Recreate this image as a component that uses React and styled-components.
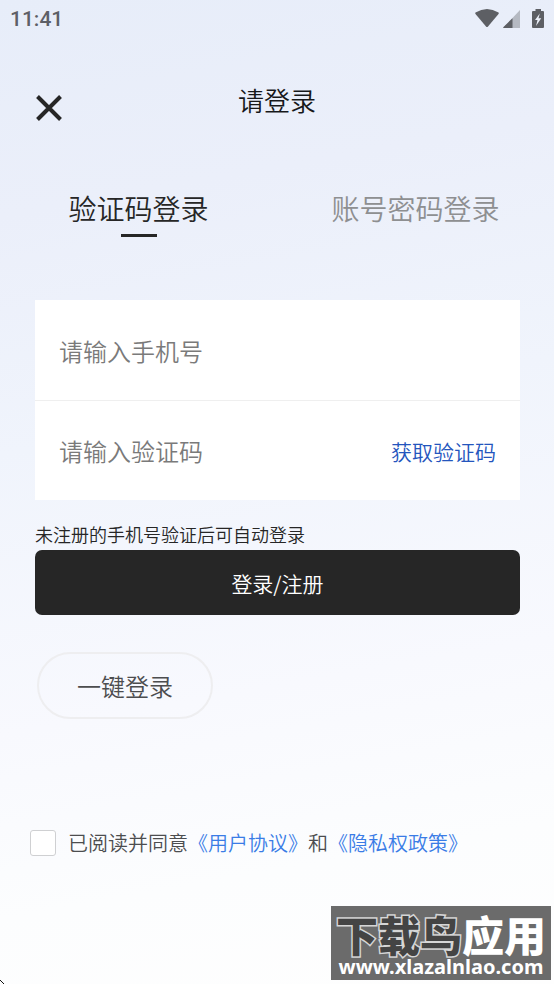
import React, { useState } from "react";
import styled, { createGlobalStyle } from "styled-components";

const GlobalStyle = createGlobalStyle`
  *, *::before, *::after { box-sizing: border-box; }
  body {
    margin: 0;
    font-family: "Noto Sans CJK SC", "Noto Sans", sans-serif;
    font-weight: 350;
    color: #262626;
    background: #fdfdfe;
  }
  button, input { font: inherit; color: inherit; }
  button { padding: 0; border: 0; background: none; cursor: pointer; }
  a { text-decoration: none; }
`;

const Page = styled.div`
  position: relative;
  display: flex;
  flex-direction: column;
  min-height: 100vh;
  overflow: hidden;
  background: linear-gradient(170deg, #e7edf9 0%, #ebeffa 20%, #f0f4fc 42%, #f8f9fe 68%, #fcfdfe 85%, #fefefe 100%);
`;

const StatusBar = styled.div`
  display: flex;
  align-items: center;
  justify-content: space-between;
  height: 38px;
  padding: 0 9px 0 10px;
  color: #5d5f66;
`;

const Clock = styled.time`
  font: 500 21px/24px Roboto, sans-serif;
`;

const StatusIcons = styled.div`
  display: flex;
  align-items: center;
  height: 20px;
`;

const Header = styled.header`
  display: grid;
  grid-template-columns: 28px 1fr 28px;
  align-items: center;
  height: 60px;
  margin-top: 32px;
  padding: 0 35px;
`;

const CloseButton = styled.button`
  display: flex;
  height: 28px;
  margin-top: 16px;
`;

const Title = styled.h1`
  margin: 0;
  text-align: center;
  font-size: 26px;
  line-height: 38px;
  font-weight: 350;
  color: #17181a;
`;

const Tabs = styled.div`
  display: grid;
  grid-template-columns: 1fr 1fr;
  margin-top: 58px;
`;

const Tab = styled.button`
  display: flex;
  flex-direction: column;
  align-items: center;
  gap: 6px;
  font-size: 28px;
  line-height: 40px;
  color: ${(p) => (p.$active ? "#262626" : "#8e8f91")};

  &::after {
    content: "";
    width: 36px;
    height: 3px;
    background: ${(p) => (p.$active ? "#262626" : "transparent")};
  }
`;

const Form = styled.form`
  display: flex;
  flex-direction: column;
  margin: 63px 34px 0 35px;
`;

const Fields = styled.div`
  background: #fff;
`;

const Field = styled.div`
  display: flex;
  align-items: center;
  height: 100px;
  padding: 0 24px;

  & + & { border-top: 1px solid #efefef; }
`;

const TextInput = styled.input`
  flex: 1;
  min-width: 0;
  height: 48px;
  padding: 0;
  border: 0;
  outline: 0;
  background: transparent;
  font-size: 24px;

  &::placeholder { color: #7a7a7a; opacity: 1; }
`;

const CodeButton = styled.button`
  font-size: 21px;
  line-height: 32px;
  color: #2455bd;
`;

const Note = styled.p`
  margin: 20px 0 2px;
  font-size: 18px;
  line-height: 28px;
`;

const SubmitButton = styled.button`
  height: 65px;
  border-radius: 7px;
  background: #262626;
  color: #fff;
  font-size: 21px;
`;

const QuickButton = styled.button`
  align-self: flex-start;
  width: 176px;
  height: 67px;
  margin: 37px 0 0 2px;
  border: 2px solid #eeeef0;
  border-radius: 34px;
  font-size: 24px;
  color: #4c4d4f;
`;

const Agreement = styled.div`
  display: flex;
  align-items: center;
  gap: 12px;
  margin: 108px 30px 0;
  font-size: 20px;
  line-height: 32px;
  color: #4c4d4f;
`;

const Checkbox = styled.input`
  appearance: none;
  flex: none;
  width: 26px;
  height: 26px;
  margin: 0;
  border: 1px solid #cfd0d2;
  border-radius: 3px;
  background: #fff;

  &:checked { background: #4484e8; }
`;

const PolicyLink = styled.a`
  color: #3a7ce6;
`;

const Watermark = styled.div`
  position: absolute;
  right: 3px;
  bottom: 4px;
  display: flex;
  flex-direction: column;
  align-items: center;
  width: 220px;
  height: 74px;
  padding-top: 6px;
  background: #6b6b6b;
  color: #fff;
  white-space: nowrap;
`;

const Brand = styled.div`
  font-size: 42px;
  line-height: 44px;
  font-weight: 900;
`;

const BrandDark = styled.span`
  color: #444;
  paint-order: stroke fill;
  -webkit-text-stroke: 3px #d6d6d6;
`;

const Site = styled.div`
  font: 700 20px/22px "Noto Sans", sans-serif;
`;

const Cursor = styled.svg`
  position: absolute;
  left: 0;
  bottom: 0;
`;

export default function App() {
  const [tab, setTab] = useState("code");
  return (
    <>
      <GlobalStyle />
      <Page>
        <StatusBar>
          <Clock>11:41</Clock>
          <StatusIcons>
            <svg width="70" height="20" viewBox="0 0 70 20" aria-hidden="true">
              <path d="M.5 3.5Q12-3.5 23.5 3.5Q24 4 23.5 5L13 17.6Q12 18.6 11 17.6L.5 5Q0 4 .5 3.5Z" fill="#5d5f64" />
              <path d="M45 1V19H28Z" fill="#b5b9c2" />
              <path d="M37.5 9.2V19H28.5Q28 18.6 28.5 18Z" fill="#5d5f64" />
              <path d="M60.5 0H66V2H68Q69 2 69 3V18Q69 19 68 19H58Q57 19 57 18V3Q57 2 58 2H60.5Z" fill="#5d5f64" />
              <path d="M64.8 4.5L60 11H62.5L61 17L66.2 9.3H63.5Z" fill="#edf1fa" />
            </svg>
          </StatusIcons>
        </StatusBar>
        <Header>
          <CloseButton aria-label="关闭">
            <svg width="28" height="28" viewBox="0 0 28 28" fill="none" stroke="#262626" strokeWidth="4">
              <path d="M2.5 2.5L25.5 25.5M25.5 2.5L2.5 25.5" />
            </svg>
          </CloseButton>
          <Title>请登录</Title>
        </Header>
        <Tabs role="tablist">
          <Tab role="tab" aria-selected={tab === "code"} $active={tab === "code"} onClick={() => setTab("code")}>
            验证码登录
          </Tab>
          <Tab role="tab" aria-selected={tab === "password"} $active={tab === "password"} onClick={() => setTab("password")}>
            账号密码登录
          </Tab>
        </Tabs>
        <Form onSubmit={(e) => e.preventDefault()}>
          <Fields>
            <Field>
              <TextInput type="tel" aria-label="手机号" placeholder="请输入手机号" />
            </Field>
            <Field>
              <TextInput inputMode="numeric" aria-label="验证码" placeholder="请输入验证码" />
              <CodeButton type="button">获取验证码</CodeButton>
            </Field>
          </Fields>
          <Note>未注册的手机号验证后可自动登录</Note>
          <SubmitButton type="submit">登录/注册</SubmitButton>
          <QuickButton type="button">一键登录</QuickButton>
        </Form>
        <Agreement>
          <Checkbox type="checkbox" id="agree" />
          <div>
            <label htmlFor="agree">已阅读并同意</label>
            <PolicyLink href="#terms">《用户协议》</PolicyLink>
            和
            <PolicyLink href="#privacy">《隐私权政策》</PolicyLink>
          </div>
        </Agreement>
        <Watermark>
          <Brand><BrandDark>下载鸟</BrandDark>应用</Brand>
          <Site>www.xlazalnlao.com</Site>
        </Watermark>
        <Cursor width="5" height="5" viewBox="0 0 5 5" aria-hidden="true">
          <path d="M0 1L4 5" stroke="#111" strokeWidth="1" />
        </Cursor>
      </Page>
    </>
  );
}
